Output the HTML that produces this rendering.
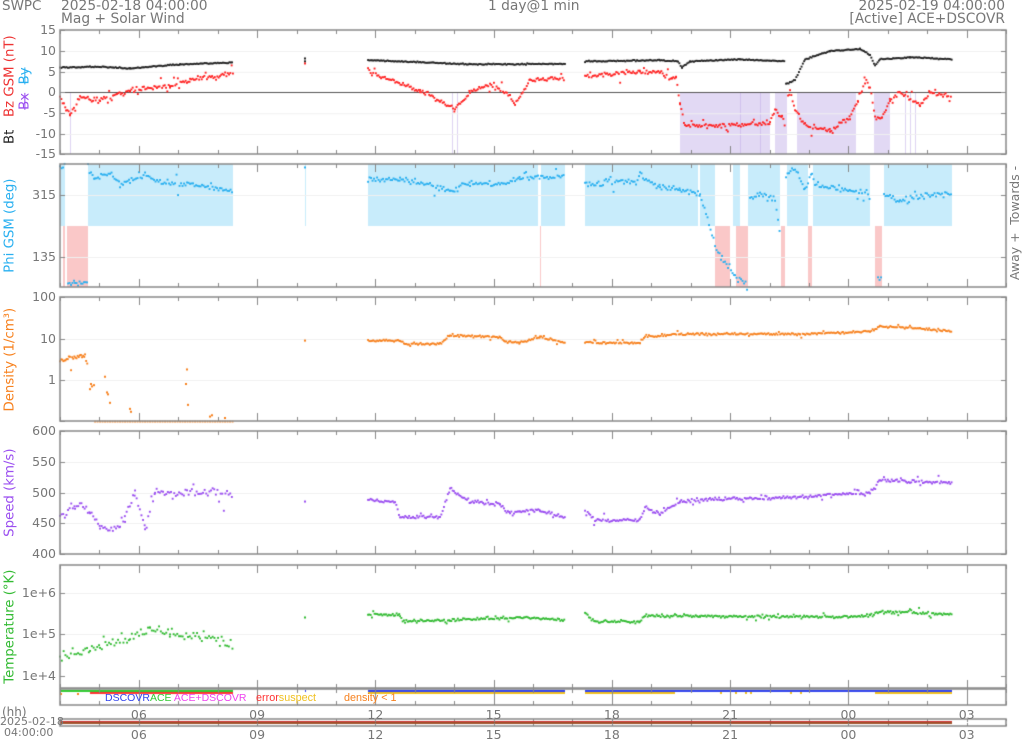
<!DOCTYPE html>
<html><head><meta charset="utf-8">
<style>
html,body{margin:0;padding:0;background:#fff;}
body{width:1024px;height:741px;position:relative;overflow:hidden;font-family:"DejaVu Sans","Liberation Sans",sans-serif;color:#777;}
canvas{position:absolute;left:0;top:0;}
.t{position:absolute;white-space:nowrap;line-height:1;}
.yl{position:absolute;font-size:12.5px;color:#777;text-align:right;width:40px;line-height:1;}
.rot{position:absolute;transform:rotate(-90deg);transform-origin:center center;white-space:nowrap;font-size:13.3px;line-height:1;text-align:center;}
.xl{position:absolute;font-size:12.5px;color:#777;line-height:1;width:30px;text-align:center;}
</style></head><body>
<canvas id="c" width="1024" height="741"></canvas>

<div class="t" style="left:2px;top:0px;font-size:13.5px;color:#777">SWPC</div>
<div class="t" style="left:61px;top:0px;font-size:13.8px;color:#777">2025-02-18 04:00:00</div>
<div class="t" style="left:61px;top:13px;font-size:13.8px;color:#777">Mag + Solar Wind</div>
<div class="t" style="left:488px;top:0px;font-size:13.8px;color:#777">1 day@1 min</div>
<div class="t" style="right:19px;top:0px;font-size:13.8px;color:#777">2025-02-19 04:00:00</div>
<div class="t" style="right:19px;top:13px;font-size:13.8px;color:#777">[Active] ACE+DSCOVR</div>

<div class="yl" style="left:16px;top:24px">15</div>
<div class="yl" style="left:16px;top:45px">10</div>
<div class="yl" style="left:16px;top:66px">5</div>
<div class="yl" style="left:16px;top:86px">0</div>
<div class="yl" style="left:16px;top:107px">-5</div>
<div class="yl" style="left:16px;top:128px">-10</div>
<div class="yl" style="left:16px;top:148px">-15</div>
<div class="rot" style="left:-50px;top:83px;width:120px;"><span style="color:#222">Bt</span>&nbsp;&nbsp;&nbsp;<span style="color:#e33">Bz GSM (nT)</span></div>
<div class="rot" style="left:-5px;top:82px;width:60px;"><span style="color:#9b4ff0;text-decoration:line-through">Bx</span>&nbsp;&nbsp;<span style="color:#2ab0f0;text-decoration:line-through">By</span></div>

<div class="yl" style="left:16px;top:189px">315</div>
<div class="yl" style="left:16px;top:251px">135</div>
<div class="rot" style="left:-55px;top:219px;width:130px;color:#2ab0f0">Phi GSM (deg)</div>
<div class="rot" style="left:975px;top:189px;width:80px;font-size:12.5px;color:#777">Towards -</div>
<div class="rot" style="left:975px;top:250px;width:80px;font-size:12.5px;color:#777">Away +</div>

<div class="yl" style="left:16px;top:291px">100</div>
<div class="yl" style="left:16px;top:333px">10</div>
<div class="yl" style="left:16px;top:374px">1</div>
<div class="rot" style="left:-55px;top:353px;width:130px;color:#f7811e">Density (1/cm³)</div>

<div class="yl" style="left:16px;top:425px">600</div>
<div class="yl" style="left:16px;top:456px">550</div>
<div class="yl" style="left:16px;top:487px">500</div>
<div class="yl" style="left:16px;top:517px">450</div>
<div class="yl" style="left:16px;top:548px">400</div>
<div class="rot" style="left:-55px;top:486px;width:130px;color:#9b4ff0">Speed (km/s)</div>

<div class="yl" style="left:16px;top:587px">1e+6</div>
<div class="yl" style="left:16px;top:628px">1e+5</div>
<div class="yl" style="left:16px;top:670px">1e+4</div>
<div class="rot" style="left:-65px;top:620px;width:150px;color:#33bb33">Temperature (°K)</div>

<div class="t" style="left:105px;top:693px;font-size:10.5px;font-family:'Liberation Sans',sans-serif"><span style="color:#3344ee">DSCOVR</span><span style="color:#33cc33">ACE</span> <span style="color:#ee44ee">ACE+DSCOVR</span></div>
<div class="t" style="left:256px;top:693px;font-size:10.8px;font-family:'Liberation Sans',sans-serif"><span style="color:#f33">error</span><span style="color:#f0c020">suspect</span></div>
<div class="t" style="left:344px;top:693px;font-size:10.8px;font-family:'Liberation Sans',sans-serif;color:#f7811e">density &lt; 1</div>

<div class="t" style="left:2px;top:706px;font-size:12px">(hh)</div>
<div class="t" style="left:0px;top:716px;font-size:11px">2025-02-18</div>
<div class="t" style="left:4px;top:727px;font-size:11px">04:00:00</div>

<div id="xl"></div>

<script>
var c=document.getElementById('c'),g=c.getContext('2d');
var L=60,R=1006;
var s=12345;function rnd(){s|=0;s=s+0x6D2B79F5|0;var t=Math.imul(s^s>>>15,1|s);t=t+Math.imul(t^t>>>7,61|t)^t;return((t^t>>>14)>>>0)/4294967296;}
function gn(){return (rnd()+rnd()+rnd()-1.5)/1.5;}
var panels=[[30,154],[164,287],[297,421],[431,554],[565,688],[689,705],[719,726]];
var hx=function(h){return L+h*39.42;};
function band(x0,x1,y0,y1,col){g.fillStyle=col;g.fillRect(x0,y0,x1-x0,y1-y0);}
var Y1=function(v){return 92.5-v*4.15;};
[[680,770],[775,787],[797,856],[874,890]].forEach(function(r){band(r[0],r[1],92.5,154,'rgba(190,170,230,0.45)');});
[70,452,457,905,910,915,740,760].forEach(function(x){band(x,x+1,92.5,154,'rgba(190,170,230,0.5)');});
[[60,65],[88,233],[305,306],[368,538],[541,565],[585,698],[700,715],[733,740],[748,780],[787,808],[813,870],[884,952]].forEach(function(r){band(r[0],r[1],164,226,'#c8ecfb');});
[[63,65],[67,88],[540,541],[715,730],[736,748],[781,785],[808,812],[875,882]].forEach(function(r){band(r[0],r[1],226,287,'#fac8c8');});
g.strokeStyle='#f0f0f0';g.lineWidth=1;
[Y1(10),Y1(5),Y1(-5),Y1(-10),195,257,339,380,462,493,523,593,634].forEach(function(y){g.beginPath();g.moveTo(L,y+.5);g.lineTo(R,y+.5);g.stroke();});
g.strokeStyle='#555';g.beginPath();g.moveTo(L,92.5);g.lineTo(R,92.5);g.stroke();
function series(keys,noise,col,Y,lg,step,out){
 g.fillStyle=col;step=step||1.3;out=out||0;
 for(var i=0;i<keys.length-1;i++){var a=keys[i],b=keys[i+1];if(!a||!b)continue;
  for(var x=a[0];x<b[0];x+=step){var t=(x-a[0])/(b[0]-a[0]);var v=lg?(Math.log10(a[1])*(1-t)+Math.log10(b[1])*t):(a[1]*(1-t)+b[1]*t);
   var n=gn()*noise; if(rnd()<out) n*=3.5; v+=n;var y=Y(lg?Math.pow(10,v):v);g.fillRect(x-0.9,y-0.9,1.9,1.9);}}
}
function pts(list,col,Y){g.fillStyle=col;list.forEach(function(k){g.fillRect(k[0]-1,Y(k[1])-1,2,2);});}
series([[60,6],[100,6.2],[130,5.8],[180,6.8],[233,7.2],null,[368,7.8],[420,7.3],[470,6.8],[565,6.9],null,[585,7.5],[660,7.8],[678,7.5],[682,6],[690,7.5],[740,8],[785,7.5],null,[786,2],[795,3],[805,8],[830,10],[860,10.5],[870,9],[875,6.5],[880,8],[910,8.5],[952,8]],0.2,'#222',Y1);
pts([[305,7.5],[305,8.2]],'#222',Y1);
series([[60,-1],[66,-4],[70,-5.5],[80,-1],[100,-2],[130,0.5],[140,1],[170,1.5],[190,3],[233,4.5],null,[368,5],[390,3],[420,0.5],[440,-2],[455,-4],[470,0],[490,2],[510,-1],[515,-3],[530,3],[565,3.5],null,[585,4],[640,5],[660,5],[672,3],[676,4],[680,-3],[685,-8],[720,-8],[770,-7.5],[775,-4],[782,-6],[785,-7.5],null,[788,-1],[790,0],[795,-4],[805,-8],[830,-9],[850,-6],[858,-2],[865,3],[870,2],[875,-6],[882,-6],[890,-2],[900,0],[920,-3],[930,0],[952,-1]],0.8,'#f22',Y1,false,1.3,0.15);
pts([[305,7]],'#f22',Y1);
var Y2=function(v){return 195-(v-315)*(62/180);};
series([[60,398],[65,398],null,[68,55],[75,60],[88,62],null,[88,395],[95,365],[110,380],[120,345],[130,355],[145,375],[160,350],[190,345],[233,330],null,[368,360],[400,360],[430,345],[450,325],[470,350],[500,345],[520,365],[565,370],null,[585,345],[640,360],[660,340],[680,330],[700,315],[715,170],[722,130],[735,80],[748,55],null,[750,300],[760,320],[775,305],[780,200],null,[786,370],[795,395],[805,330],[812,380],[815,345],[850,330],[870,320],null,[878,75],[882,82],null,[884,315],[900,300],[952,320]],12,'#2ab0f0',Y2,false,1.5,0.15);
pts([[305,395]],'#2ab0f0',Y2);
var Y3=function(v){return 380-Math.log10(v)*41.3;};
series([[60,3],[85,4],[88,2]],0.1,'#f7811e',Y3,true,1.1,0.1);
pts([[90,0.6],[92,0.7],[91,0.8],[94,0.75],[105,1.2],[107,0.5],[108,0.45],[110,0.28],[130,0.2],[131,0.17],[187,1.8],[186,0.8],[188,0.25],[210,0.13],[212,0.14],[225,0.12],[305,9]],'#f7811e',Y3);
series([[95,0.098],[233,0.098]],0,'rgba(247,129,30,0.7)',Y3,true,2.5);
series([[368,9],[400,9],[405,7.5],[440,7.5],[450,12],[500,11],[505,8.5],[520,8],[540,11],[565,8],null,[585,8],[640,8],[645,11],[680,13],[800,13],[870,15],[880,20],[920,18],[952,15]],0.035,'#f7811e',Y3,true,1.3,0.15);
var Y4=function(v){return 554-(v-400)*0.617;};
series([[60,460],[75,480],[90,470],[100,445],[120,440],[125,460],[135,500],[145,440],[155,500],[233,500]],11,'#9b4ff0',Y4,false,1.6,0.1);
series([[368,488],[395,485],[400,460],[440,460],[450,505],[470,485],[500,480],[510,465],[520,470],[540,470],[565,460],null,[585,470],[595,455],[640,455],[645,475],[660,465],[680,485],[720,490],[760,490],[800,493],[870,500],[880,520],[952,515]],4,'#9b4ff0',Y4,false,1.3,0.12);
pts([[305,485]],'#9b4ff0',Y4);
var Y5=function(v){return 634-Math.log10(v/1e5)*41.5;};
series([[60,3e4],[90,4e4],[100,6e4],[130,8e4],[150,1.5e5],[170,1e5],[200,9e4],[233,6e4]],0.2,'#33bb33',Y5,true,1.8);
pts([[305,2.5e5]],'#33bb33',Y5);
series([[368,3e5],[400,2.8e5],[405,2e5],[450,2.2e5],[520,2.5e5],[565,2.2e5],null,[585,3e5],[595,2e5],[640,2e5],[645,2.8e5],[700,2.7e5],[850,2.6e5],[870,2.8e5],[880,3.5e5],[952,3e5]],0.05,'#33bb33',Y5,true,1.3,0.15);
function hl(x0,x1,y,col,w){g.fillStyle=col;g.fillRect(x0,y,x1-x0,w||2);}
hl(60,233,690,'#33cc33');hl(90,233,692,'#f33');hl(60,62,693,'#f7811e');hl(77,79,693,'#f7811e');
hl(368,565,690,'#3344ee');hl(368,565,692,'#f0c020');
hl(585,952,690,'#3344ee');hl(585,675,692,'#f0c020');hl(875,952,692,'#f0c020');
[720,735,745,750,790,800,880,890,900,910,930,940].forEach(function(x){hl(x,x+2,692,'#f0c020');});
hl(305,306,690,'#3344ee');
hl(60,952,721,'#c33',1);hl(60,952,722,'#a0522d',2);
g.strokeStyle='#888';g.lineWidth=1.5;
panels.forEach(function(p,i){g.strokeRect(L,p[0],R-L,p[1]-p[0]);
 for(var h=0;h<=24;h++){var x=Math.round(hx(h))+.5;var maj=(h+1)%3==0;var len=maj?8:4;if(i==6)len=maj?3:2;
  g.lineWidth=1;g.beginPath();g.moveTo(x,p[0]);g.lineTo(x,p[0]+len);g.moveTo(x,p[1]);g.lineTo(x,p[1]-len);g.stroke();}
 g.lineWidth=1.5;});
g.lineWidth=1;
function yt(y){g.beginPath();g.moveTo(L,y+.5);g.lineTo(L+5,y+.5);g.moveTo(R,y+.5);g.lineTo(R-5,y+.5);g.stroke();}
[30,51,72,92,113,134,154,195,257,297,339,380,421,431,462,493,523,554,593,634,676].forEach(yt);
var xl=document.getElementById('xl'),lab=['06','09','12','15','18','21','00','03'];
lab.forEach(function(t,i){var x=hx(2+3*i);[709,729].forEach(function(y){var d=document.createElement('div');d.className='xl';d.style.left=(x-15)+'px';d.style.top=y+'px';d.textContent=t;xl.appendChild(d);});});
</script>
</body></html>
